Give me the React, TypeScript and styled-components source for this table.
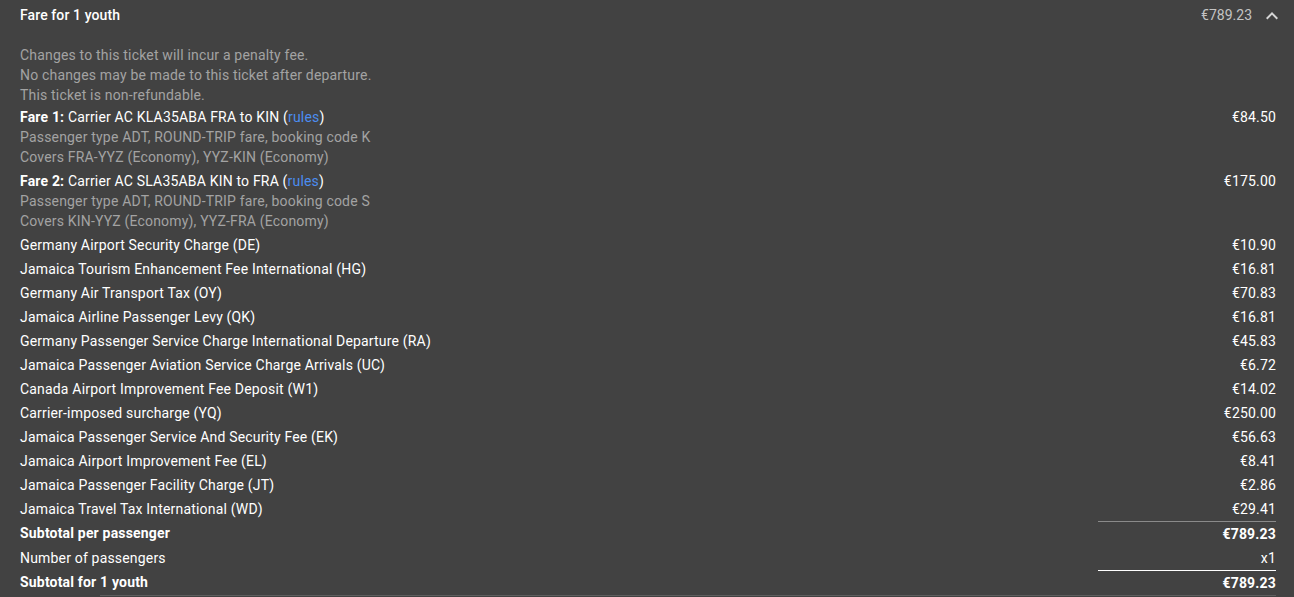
import React from 'react'
import styled, { createGlobalStyle } from 'styled-components'

type Row = {
    label: string
    value: string
    strong?: boolean
    rule?: 'soft' | 'solid'
}

const notices = [
    'Changes to this ticket will incur a penalty fee.',
    'No changes may be made to this ticket after departure.',
    'This ticket is non-refundable.',
]

const fares = [
    {
        title: 'Fare 1:',
        text: 'Carrier AC KLA35ABA FRA to KIN',
        value: '€84.50',
        lines: ['Passenger type ADT, ROUND-TRIP fare, booking code K', 'Covers FRA-YYZ (Economy), YYZ-KIN (Economy)'],
    },
    {
        title: 'Fare 2:',
        text: 'Carrier AC SLA35ABA KIN to FRA',
        value: '€175.00',
        lines: ['Passenger type ADT, ROUND-TRIP fare, booking code S', 'Covers KIN-YYZ (Economy), YYZ-FRA (Economy)'],
    },
]

const rows: Row[] = [
    { label: 'Germany Airport Security Charge (DE)', value: '€10.90' },
    { label: 'Jamaica Tourism Enhancement Fee International (HG)', value: '€16.81' },
    { label: 'Germany Air Transport Tax (OY)', value: '€70.83' },
    { label: 'Jamaica Airline Passenger Levy (QK)', value: '€16.81' },
    { label: 'Germany Passenger Service Charge International Departure (RA)', value: '€45.83' },
    { label: 'Jamaica Passenger Aviation Service Charge Arrivals (UC)', value: '€6.72' },
    { label: 'Canada Airport Improvement Fee Deposit (W1)', value: '€14.02' },
    { label: 'Carrier-imposed surcharge (YQ)', value: '€250.00' },
    { label: 'Jamaica Passenger Service And Security Fee (EK)', value: '€56.63' },
    { label: 'Jamaica Airport Improvement Fee (EL)', value: '€8.41' },
    { label: 'Jamaica Passenger Facility Charge (JT)', value: '€2.86' },
    { label: 'Jamaica Travel Tax International (WD)', value: '€29.41' },
    { label: 'Subtotal per passenger', value: '€789.23', strong: true, rule: 'soft' },
    { label: 'Number of passengers', value: 'x1' },
    { label: 'Subtotal for 1 youth', value: '€789.23', strong: true, rule: 'solid' },
]

export default function App() {
    return (
        <>
            <GlobalStyle />
            <Panel>
                <Header>
                    <Title>Fare for 1 youth</Title>
                    <HeaderPrice>€789.23</HeaderPrice>
                    <Chevron viewBox="0 0 24 24">
                        <path d="M12 8l-6 6 1.41 1.41L12 10.83l4.59 4.58L18 14z" />
                    </Chevron>
                </Header>

                <Notices>
                    {notices.map((n) => (
                        <Muted key={n}>{n}</Muted>
                    ))}
                </Notices>

                {fares.map((f) => (
                    <FareBlock key={f.title}>
                        <Line>
                            <span>
                                <b>{f.title}</b> {f.text} (<Link href="#">rules</Link>)
                            </span>
                            <span>{f.value}</span>
                        </Line>
                        {f.lines.map((l) => (
                            <Muted key={l}>{l}</Muted>
                        ))}
                    </FareBlock>
                ))}

                {rows.map((r) => (
                    <ChargeRow key={r.label} $strong={r.strong}>
                        <span>{r.label}</span>
                        <Amount $rule={r.rule}>{r.value}</Amount>
                    </ChargeRow>
                ))}
                <Footer />
            </Panel>
        </>
    )
}

const GlobalStyle = createGlobalStyle`
    html, body {
        margin: 0;
        background: #424242;
    }
    body {
        font-family: Roboto, "Liberation Sans", sans-serif;
        font-size: 14px;
        letter-spacing: 0.18px;
        color: #ffffff;
    }
`

const Panel = styled.div`
    display: flex;
    flex-direction: column;
    padding: 1px 18px 0 20px;
`

const Header = styled.div`
    display: flex;
    align-items: center;
    height: 28px;
    margin-right: -8px;
`

const Title = styled.div`
    flex: 1;
    font-weight: 500;
    letter-spacing: 0.1px;
`

const HeaderPrice = styled.div`
    color: #c4c4c4;
    margin-right: 8px;
    letter-spacing: 0;
`

const Chevron = styled.svg`
    width: 24px;
    height: 24px;
    fill: #d6d6d6;
    margin-top: 1px;
`

const Notices = styled.div`
    margin-top: 16px;
    display: flex;
    flex-direction: column;
`

const Muted = styled.div`
    line-height: 20px;
    color: #a3a3a3;
`

const FareBlock = styled.div`
    display: flex;
    flex-direction: column;
    padding: 2px 0;

    b {
        font-weight: 700;
    }
`

const Line = styled.div`
    display: flex;
    justify-content: space-between;
    line-height: 20px;
`

const Link = styled.a`
    color: #4b8df0;
    text-decoration: none;
`

const ChargeRow = styled.div<{ $strong?: boolean }>`
    display: flex;
    justify-content: space-between;
    line-height: 24px;
    font-weight: ${(p) => (p.$strong ? 700 : 400)};
`

const Amount = styled.span<{ $rule?: 'soft' | 'solid' }>`
    width: 178px;
    text-align: right;
    border-top: ${(p) =>
        p.$rule === 'soft' ? '1px solid #8a8a8a' : p.$rule === 'solid' ? '1px solid #ffffff' : 'none'};
`

const Footer = styled.div`
    margin-left: 80px;
    border-top: 1px solid #5e5e5e;
`
